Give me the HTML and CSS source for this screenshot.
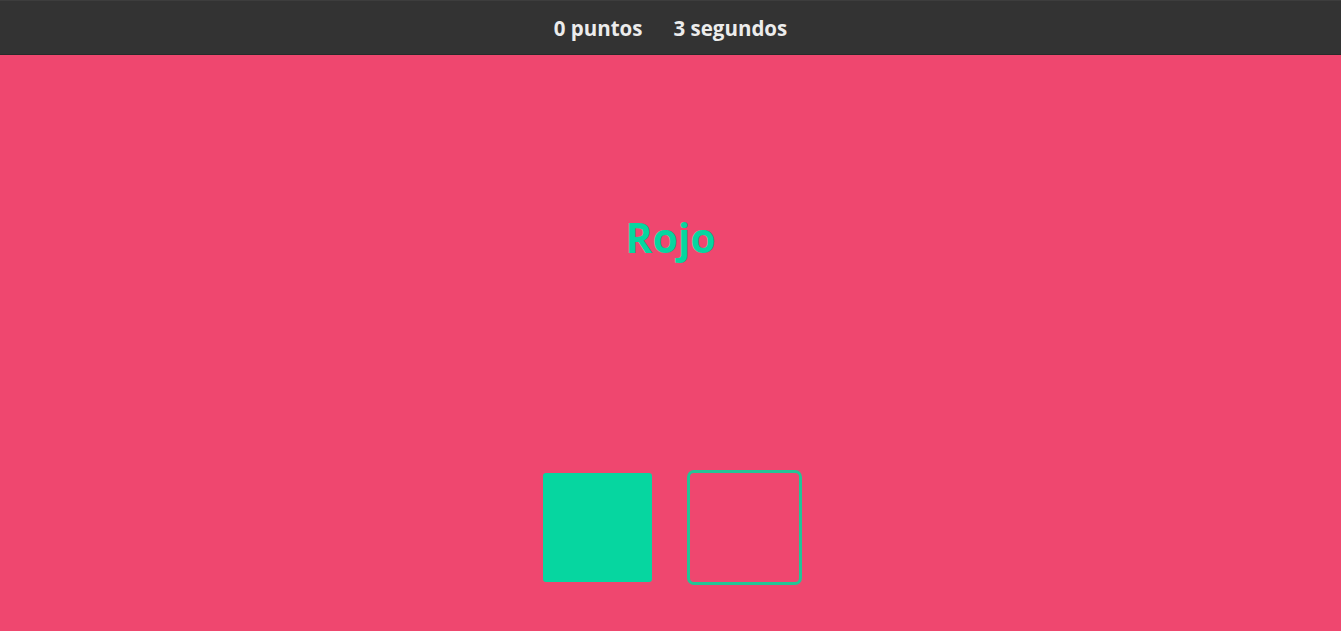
FILE: index.html
```html
<!DOCTYPE html>
<html lang="es">
<head>
<meta charset="utf-8">
<title>Juego de colores</title>
<link rel="stylesheet" href="styles.css">
</head>
<body>
<header class="bar">
  <span class="stat">0 puntos</span>
  <span class="stat">3 segundos</span>
</header>
<main class="game">
  <h1 class="word">Rojo</h1>
  <div class="choices">
    <button class="choice choice-green" aria-label="Verde"></button>
    <button class="choice choice-pink selected" aria-label="Rojo"></button>
  </div>
</main>
</body>
</html>
```
FILE: styles.css
```css
* { box-sizing: border-box; }
html, body {
  margin: 0;
  height: 100%;
}
body {
  background: #ef476f;
  font-family: "Open Sans", "Noto Sans", sans-serif;
  display: flex;
  flex-direction: column;
}
.bar {
  height: 55px;
  background: #333333;
  border-top: 1px solid #3d3d3d;
  border-bottom: 1px solid #2a2a2a;
  display: flex;
  justify-content: center;
  align-items: center;
  gap: 31px;
  color: #ececec;
  font-weight: 700;
  font-size: 20.5px;
}
.game {
  flex: 1;
  display: flex;
  flex-direction: column;
  align-items: center;
}
.word {
  margin: 154px 0 0;
  font-size: 41px;
  line-height: 56px;
  font-weight: 700;
  color: #06d6a0;
}
.choices {
  margin-top: 208px;
  display: flex;
  gap: 38px;
}
.choice {
  width: 109px;
  height: 109px;
  border: 0;
  padding: 0;
  border-radius: 3px;
  cursor: pointer;
}
.choice-green { background: #06d6a0; }
.choice-pink { background: #ef476f; }
.selected {
  outline: 3px solid #22c596;
  outline-offset: 0;
  border-radius: 4px;
}
```
